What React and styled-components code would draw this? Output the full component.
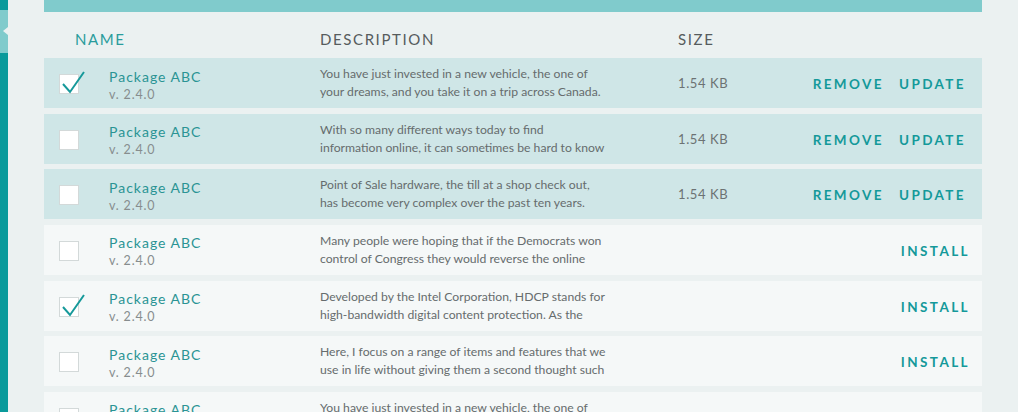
import React from 'react';
import styled, { createGlobalStyle } from 'styled-components';

const packages = [
    { checked: true, installed: true, lines: ['You have just invested in a new vehicle, the one of', 'your dreams, and you take it on a trip across Canada.'] },
    { checked: false, installed: true, lines: ['With so many different ways today to find', 'information online, it can sometimes be hard to know'] },
    { checked: false, installed: true, lines: ['Point of Sale hardware, the till at a shop check out,', 'has become very complex over the past ten years.'] },
    { checked: false, installed: false, lines: ['Many people were hoping that if the Democrats won', 'control of Congress they would reverse the online'] },
    { checked: true, installed: false, lines: ['Developed by the Intel Corporation, HDCP stands for', 'high-bandwidth digital content protection. As the'] },
    { checked: false, installed: false, lines: ['Here, I focus on a range of items and features that we', 'use in life without giving them a second thought such'] },
    { checked: false, installed: false, lines: ['You have just invested in a new vehicle, the one of', 'your dreams, and you take it on a trip across Canada.'] },
];

const App = () => {
    return (
        <Page>
            <GlobalStyle />
            <Sidebar>
                <SideBlock />
                <SideTab />
                <SideBlock $grow />
            </Sidebar>
            <Main>
                <TopBar />
                <Header>
                    <HeadCell $accent $indent>NAME</HeadCell>
                    <HeadCell>DESCRIPTION</HeadCell>
                    <HeadCell>SIZE</HeadCell>
                </Header>
                <List>
                    {packages.map((p, i) => (
                        <Row key={i} $installed={p.installed}>
                            <CheckCell>
                                <Checkbox>
                                    {p.checked && (
                                        <Tick viewBox="0 0 26 24" width="26" height="24">
                                            <path d="M2 13 L9 21 L23 1" fill="none" stroke="#16999a" strokeWidth="2" strokeLinejoin="miter" />
                                        </Tick>
                                    )}
                                </Checkbox>
                            </CheckCell>
                            <NameCell>
                                <PackageName>Package ABC</PackageName>
                                <Version>v. 2.4.0</Version>
                            </NameCell>
                            <Description>
                                {p.lines[0]}
                                <br />
                                {p.lines[1]}
                            </Description>
                            <Size>{p.installed ? '1.54 KB' : ''}</Size>
                            <Actions $installed={p.installed}>
                                {p.installed ? (
                                    <>
                                        <Action>REMOVE</Action>
                                        <Action>UPDATE</Action>
                                    </>
                                ) : (
                                    <Action>INSTALL</Action>
                                )}
                            </Actions>
                        </Row>
                    ))}
                </List>
            </Main>
        </Page>
    );
};

const GlobalStyle = createGlobalStyle`
    html, body {
        margin: 0;
        background: #ebf1f1;
        overflow: hidden;
    }
    body {
        font-family: Lato, 'Liberation Sans', sans-serif;
    }
`

const Page = styled.div`
    display: flex;
    height: 412px;
    overflow: hidden;
`

const Sidebar = styled.aside`
    width: 8px;
    display: flex;
    flex-direction: column;
    flex-shrink: 0;
`

const SideBlock = styled.div`
    background: #0a9a9b;
    height: 10px;
    flex-grow: ${props => (props.$grow ? 1 : 0)};
`

const SideTab = styled.div`
    position: relative;
    height: 43px;
    background: #80cbcc;

    &::after {
        content: '';
        position: absolute;
        left: 3px;
        top: 17px;
        border-top: 4px solid transparent;
        border-bottom: 4px solid transparent;
        border-right: 5px solid #ebf1f1;
    }
`

const Main = styled.main`
    width: 938px;
    margin-left: 36px;
    display: flex;
    flex-direction: column;
`

const TopBar = styled.div`
    height: 12px;
    background: #80cbcc;
    flex-shrink: 0;
`

const Header = styled.div`
    display: grid;
    grid-template-columns: 276px 358px 1fr;
    height: 46px;
    align-items: center;
    padding-top: 8px;
    box-sizing: border-box;
    flex-shrink: 0;
`

const HeadCell = styled.div`
    font-size: 15px;
    letter-spacing: 1.6px;
    color: ${props => (props.$accent ? '#2a9c9c' : '#565c5d')};
    padding-left: ${props => (props.$indent ? '31px' : '0')};
`

const List = styled.div`
    display: flex;
    flex-direction: column;
    gap: 5.67px;
`

const Row = styled.div`
    display: grid;
    grid-template-columns: 65px 211px 358px 1fr auto;
    align-items: center;
    height: 50px;
    flex-shrink: 0;
    background: ${props => (props.$installed ? '#cfe6e7' : '#f5f8f8')};
`

const CheckCell = styled.div`
    padding-left: 15px;
    display: flex;
    align-items: center;
    padding-top: 2px;
`

const Checkbox = styled.div`
    position: relative;
    width: 18px;
    height: 18px;
    background: #fff;
    border: 1px solid #d3d9d9;
`

const Tick = styled.svg`
    position: absolute;
    left: 1px;
    top: -4px;
    overflow: visible;
`

const NameCell = styled.div`
    display: flex;
    flex-direction: column;
    padding-top: 4px;
`

const PackageName = styled.span`
    font-size: 14px;
    letter-spacing: 1px;
    color: #2a9494;
    line-height: 17px;
`

const Version = styled.span`
    font-size: 12.5px;
    letter-spacing: 0.8px;
    color: #878d8e;
    line-height: 16px;
    margin-top: 2px;
`

const Description = styled.p`
    margin: 0;
    font-size: 12.2px;
    line-height: 18px;
    color: #666c6d;
    white-space: nowrap;
`

const Size = styled.div`
    font-size: 13px;
    letter-spacing: 0.6px;
    color: #6c7273;
`

const Actions = styled.div`
    display: flex;
    gap: 15px;
    padding-right: ${props => (props.$installed ? '16px' : '12px')};
    padding-top: 2px;
`

const Action = styled.span`
    font-size: 13.5px;
    font-weight: 700;
    letter-spacing: 2.4px;
    color: #14999a;
`

export default App;
